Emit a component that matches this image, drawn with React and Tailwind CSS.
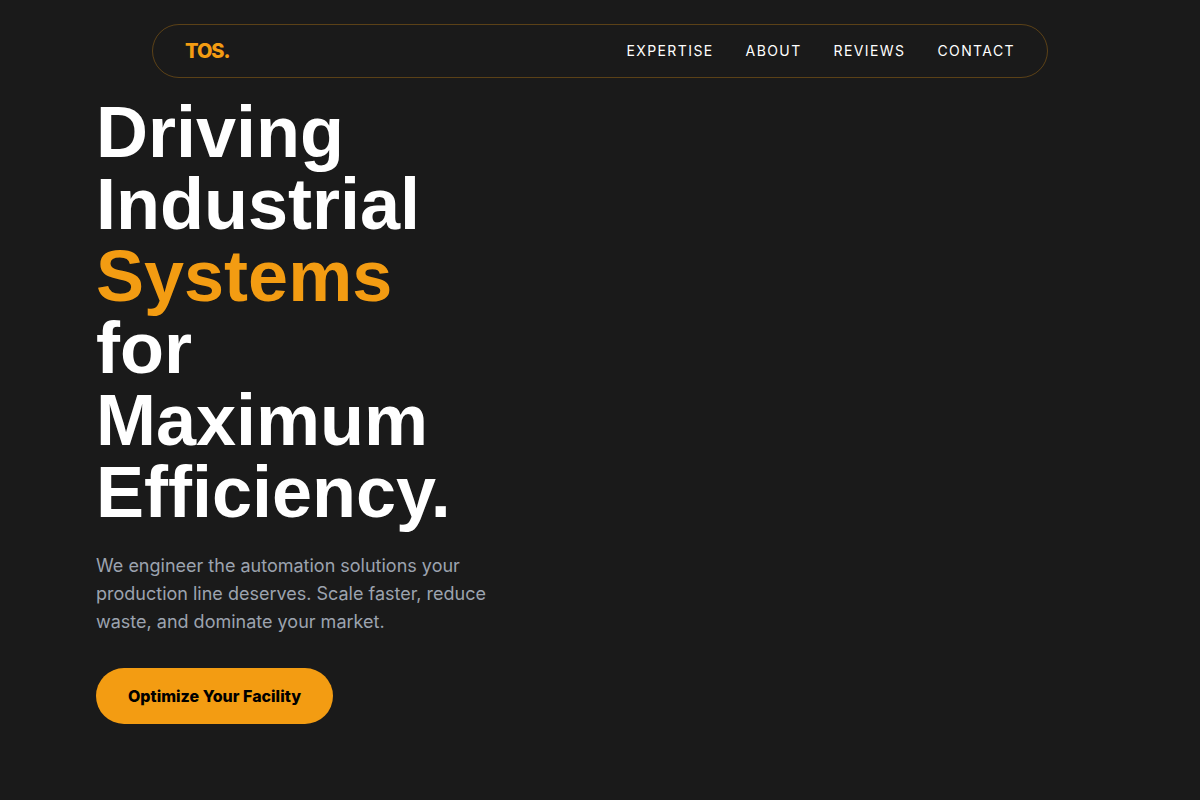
import React from 'react';

const links = [
  { label: 'Expertise', href: '#expertise' },
  { label: 'About', href: '#about' },
  { label: 'Reviews', href: '#reviews' },
  { label: 'Contact', href: '#contact' },
];

function Navbar() {
  return (
    <nav className="w-full max-w-4xl mx-auto flex items-center justify-between px-8 py-3 rounded-full border border-[#f39c12]/30">
      <a href="#home" className="text-xl font-extrabold tracking-tighter text-[#f39c12]">TOS.</a>
      <div className="flex gap-8 text-sm uppercase tracking-widest text-white">
        {links.map((link) => (
          <a key={link.href} href={link.href}>{link.label}</a>
        ))}
      </div>
    </nav>
  );
}

function Hero() {
  return (
    <section className="grid grid-cols-2 gap-12 px-24 pt-[18px]">
      <div>
        <h1 className="max-w-sm font-['Liberation_Sans',sans-serif] text-7xl leading-none font-bold text-white">
          Driving Industrial <span className="text-[#f39c12]">Systems</span>
          <br />
          for Maximum Efficiency.
        </h1>
        <p className="mt-6 max-w-md text-lg text-[#9ca3af]">
          We engineer the automation solutions your production line deserves. Scale faster, reduce waste, and dominate your market.
        </p>
        <button type="button" className="mt-8 px-8 py-4 rounded-full bg-[#f39c12] font-extrabold text-black">
          Optimize Your Facility
        </button>
      </div>
    </section>
  );
}

function App() {
  return (
    <div className="min-h-screen bg-[#1a1a1a] pt-6 font-[Inter,sans-serif]">
      <Navbar />
      <Hero />
    </div>
  );
}

export default App;
